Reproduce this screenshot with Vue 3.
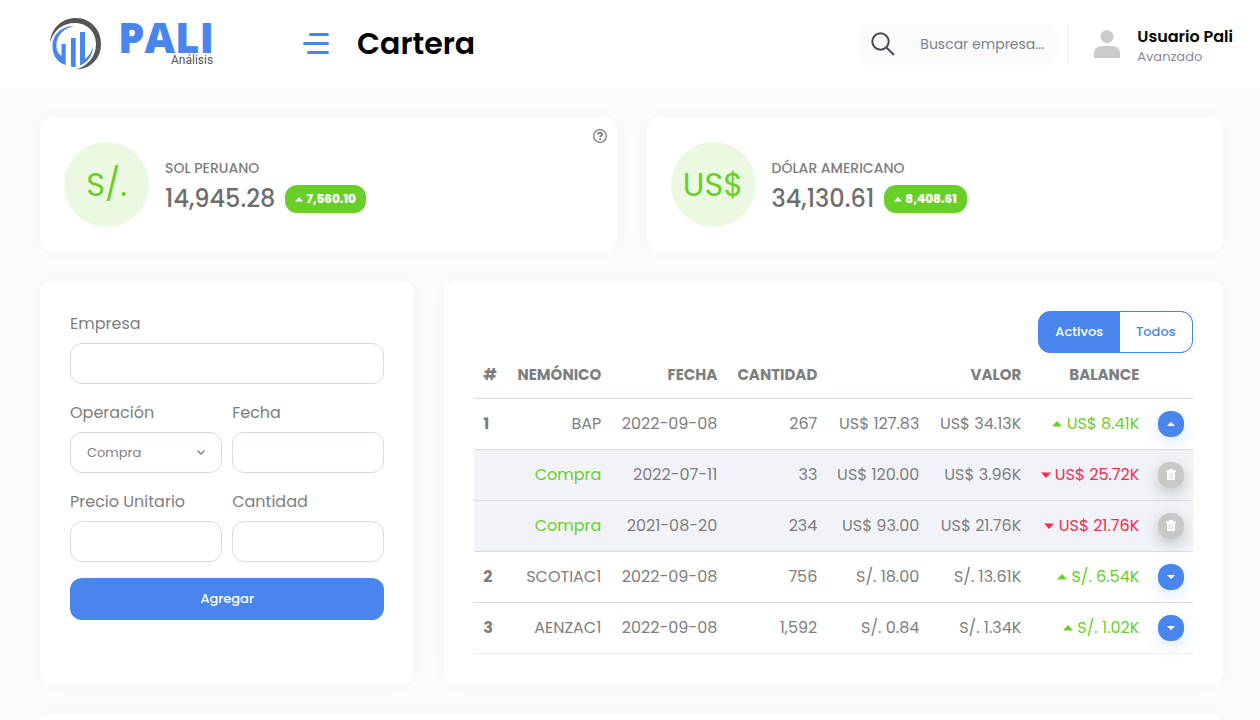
<script setup>
import { ref } from 'vue'

const query = ref('')
const filter = ref('Activos')
const filters = ['Activos', 'Todos']

const balances = [
  { symbol: 'S/.', name: 'SOL PERUANO', amount: '14,945.28', gain: '7,560.10', help: true },
  { symbol: 'US$', name: 'DÓLAR AMERICANO', amount: '34,130.61', gain: '8,408.61', help: false }
]

const rows = [
  { n: '1', code: 'BAP', date: '2022-09-08', qty: '267', price: 'US$ 127.83', value: 'US$ 34.13K', up: true, balance: 'US$ 8.41K', open: true },
  { detail: true, code: 'Compra', date: '2022-07-11', qty: '33', price: 'US$ 120.00', value: 'US$ 3.96K', up: false, balance: 'US$ 25.72K' },
  { detail: true, code: 'Compra', date: '2021-08-20', qty: '234', price: 'US$ 93.00', value: 'US$ 21.76K', up: false, balance: 'US$ 21.76K' },
  { n: '2', code: 'SCOTIAC1', date: '2022-09-08', qty: '756', price: 'S/. 18.00', value: 'S/. 13.61K', up: true, balance: 'S/. 6.54K' },
  { n: '3', code: 'AENZAC1', date: '2022-09-08', qty: '1,592', price: 'S/. 0.84', value: 'S/. 1.34K', up: true, balance: 'S/. 1.02K' }
]
</script>

<template>
  <div class="page">
    <header class="header">
      <a class="brand" href="#" aria-label="Pali Análisis">
        <svg class="emblem" viewBox="0 0 52 52" aria-hidden="true">
          <path d="M0 25 C1 10 12 0 26 0 C40 0 51 11 51 26 C51 41 40 51 26 51.500 C38 48 46 38 46 26 C46 14 37 5 25 5 C12 5 3 13 0 25Z" fill="#555" />
          <path d="M24 8 C12 8 2.500 16 2.500 28 C2.500 38 8 45 15.700 47 V26 H11.500 V38 C8 36 6 31 6.500 26 C7 17 14 10 24 8Z" fill="#4885ed" />
          <path d="M21 20 H25.700 V49 C24 49 22.500 49 21 48.500Z M30 14 H35 V41 C39 38 42 33 43 28 C43 38 37 45 30 47.500Z" fill="#4885ed" />
        </svg>
        <span class="wordmark">
          <span class="name">PALI</span>
          <span class="tagline">Análisis</span>
        </span>
      </a>
      <button class="menu" type="button" aria-label="Menú">
        <svg width="26" height="22" viewBox="0 0 26 22" fill="none" stroke="#4885ed" stroke-width="3" stroke-linecap="round" aria-hidden="true">
          <path d="M7.500 1.500H24.500M1.500 10.500H24.500M5.500 19.500H24.500" />
        </svg>
      </button>
      <h1 class="title">Cartera</h1>
      <label class="search">
        <svg width="24" height="24" viewBox="0 0 24 24" fill="none" stroke="#464a53" stroke-width="2" aria-hidden="true">
          <circle cx="9.500" cy="9.500" r="8.200" />
          <path d="M15.500 15.500L23 23" />
        </svg>
        <input v-model="query" type="text" placeholder="Buscar empresa..." aria-label="Buscar empresa" />
      </label>
      <a class="user" href="#">
        <svg width="28" height="28" viewBox="0 0 28 28" fill="#cbcbcb" aria-hidden="true">
          <circle cx="14" cy="6.500" r="6.500" />
          <path d="M1 28 V24 C1 19 4 16 9 16 H19 C24 16 27 19 27 24 V28Z" />
        </svg>
        <span class="who">
          <strong>Usuario Pali</strong>
          <small>Avanzado</small>
        </span>
      </a>
    </header>

    <main class="content">
      <section v-for="b in balances" :key="b.symbol" class="card summary">
        <span class="coin">{{ b.symbol }}</span>
        <div class="figures">
          <p class="currency">{{ b.name }}</p>
          <div class="amount-line">
            <span class="amount">{{ b.amount }}</span>
            <span class="badge">
              <svg width="8" height="5" viewBox="0 0 8 5" fill="currentColor" aria-hidden="true"><path d="M4 0L8 4.500H0Z" /></svg>
              {{ b.gain }}
            </span>
          </div>
        </div>
        <button v-if="b.help" class="help" type="button" aria-label="Ayuda">
          <svg width="14" height="14" viewBox="0 0 14 14" fill="none" stroke="#7e7e7e" aria-hidden="true">
            <circle cx="7" cy="7" r="6.300" stroke-width="1.300" />
            <path d="M4.900 5.500C5 3.200 9.100 3.200 9.100 5.400C9.100 6.800 7.100 6.700 7.100 8.300" stroke-width="1.800" />
            <path d="M6.100 10.300H8.100" stroke-width="1.800" />
          </svg>
        </button>
      </section>

      <form class="card entry" @submit.prevent>
        <div class="field wide">
          <label for="empresa">Empresa</label>
          <input id="empresa" type="text" />
        </div>
        <div class="field">
          <label for="operacion">Operación</label>
          <div class="select">
            <select id="operacion">
              <option>Compra</option>
              <option>Venta</option>
            </select>
            <svg width="8" height="5" viewBox="0 0 8 5" fill="none" stroke="#7e7e7e" stroke-width="1.300" aria-hidden="true"><path d="M.5 .5L4 4L7.500 .5" /></svg>
          </div>
        </div>
        <div class="field">
          <label for="fecha">Fecha</label>
          <input id="fecha" type="text" />
        </div>
        <div class="field">
          <label for="precio">Precio Unitario</label>
          <input id="precio" type="text" />
        </div>
        <div class="field">
          <label for="cantidad">Cantidad</label>
          <input id="cantidad" type="text" />
        </div>
        <button class="submit wide" type="submit">Agregar</button>
      </form>

      <section class="card holdings">
        <div class="toggle">
          <button v-for="f in filters" :key="f" type="button" :class="{ active: filter === f }" @click="filter = f">{{ f }}</button>
        </div>
        <table>
          <colgroup>
            <col class="c-num" /><col class="c-code" /><col class="c-date" /><col class="c-qty" />
            <col class="c-money" /><col class="c-money" /><col class="c-balance" /><col class="c-action" />
          </colgroup>
          <thead>
            <tr>
              <th>#</th><th>NEMÓNICO</th><th>FECHA</th><th>CANTIDAD</th><th></th><th>VALOR</th><th>BALANCE</th><th></th>
            </tr>
          </thead>
          <tbody>
            <tr v-for="(r, i) in rows" :key="i" :class="{ detail: r.detail }">
              <th>{{ r.n }}</th>
              <td :class="{ gain: r.detail }">{{ r.code }}</td>
              <td>{{ r.date }}</td>
              <td>{{ r.qty }}</td>
              <td>{{ r.price }}</td>
              <td>{{ r.value }}</td>
              <td :class="r.up ? 'gain' : 'loss'">
                <svg class="caret" width="10" height="6" viewBox="0 0 10 6" fill="currentColor" aria-hidden="true">
                  <path :d="r.up ? 'M5 0L10 5.500H0Z' : 'M0 .5H10L5 6Z'" />
                </svg>
                {{ r.balance }}
              </td>
              <td class="action">
                <button type="button" class="round" :aria-label="r.detail ? 'Eliminar' : 'Ver detalle'">
                  <svg v-if="r.detail" width="10" height="11" viewBox="0 0 10 11" aria-hidden="true">
                    <path d="M0 1.500H3V0H7V1.500H10V3H9V11H1V3H0Z" fill="#fff" />
                    <path d="M3.500 4V9.500M5 4V9.500M6.500 4V9.500" stroke="#d5d5d5" stroke-width=".7" />
                  </svg>
                  <svg v-else width="8" height="4" viewBox="0 0 8 4" fill="#fff" aria-hidden="true">
                    <path :d="r.open ? 'M4 0L8 4H0Z' : 'M0 0H8L4 4Z'" />
                  </svg>
                </button>
              </td>
            </tr>
          </tbody>
        </table>
      </section>

      <section class="card next"></section>
    </main>
  </div>
</template>

<style>
body {
  margin: 0;
  background: #fbfbfb;
}
</style>

<style scoped>
* {
  box-sizing: border-box;
}
.page {
  height: 100vh;
  overflow: hidden;
  background: #fbfbfb;
  color: #7e7e7e;
  font-family: Poppins, Inter, sans-serif;
  font-size: 16px;
  line-height: 24px;
}
button,
input,
select {
  font-family: inherit;
}
button {
  border: 0;
  padding: 0;
  cursor: pointer;
}
a {
  color: inherit;
  text-decoration: none;
}
svg {
  flex: none;
}
.header {
  display: flex;
  align-items: center;
  height: 88px;
  padding: 0 27px 0 50px;
  background: #fff;
}
.brand {
  display: flex;
  align-items: center;
  gap: 16px;
  width: 253px;
}
.emblem {
  width: 52px;
  height: 52px;
}
.wordmark {
  display: flex;
  flex-direction: column;
  align-items: flex-end;
  font-family: Roboto, sans-serif;
}
.name {
  color: #4885ed;
  font-family: "Open Sans", sans-serif;
  font-size: 42px;
  font-weight: 800;
  line-height: 32px;
}
.tagline {
  padding-right: 1px;
  color: #555;
  font-size: 12px;
  line-height: 14px;
}
.menu {
  display: flex;
  background: none;
}
.title {
  flex: 1;
  margin: 0 0 0 28px;
  color: #000;
  font-size: 30px;
  font-weight: 600;
  line-height: 40px;
}
.search {
  display: flex;
  align-items: center;
  gap: 25px;
  width: 200px;
  height: 41px;
  padding: 0 12px 0 13px;
  border-radius: 12px;
  background: #fbfbfb;
}
.search input {
  flex: 1;
  min-width: 0;
  padding: 0;
  border: 0;
  outline: 0;
  background: none;
  font-size: 14px;
}
.search input::placeholder {
  color: #7a828a;
  opacity: 1;
}
.user {
  display: flex;
  align-items: center;
  gap: 16px;
  height: 40px;
  margin-left: 9px;
  padding-left: 25px;
  border-left: 1px solid #eee;
}
.who {
  display: flex;
  flex-direction: column;
  padding-top: 4px;
}
.who strong {
  color: #000;
  font-weight: 600;
  line-height: 22px;
}
.who small {
  color: #89879f;
  font-size: 13px;
  line-height: 18px;
}
.content {
  display: grid;
  grid-template-columns: repeat(12, minmax(0, 1fr));
  gap: 30px;
  padding: 30px 37px 30px 40px;
}
.card {
  position: relative;
  border-radius: 12px;
  background: #fff;
  box-shadow: 0 0 20px rgba(0, 0, 0, 0.03);
}
.summary {
  grid-column: span 6;
  display: flex;
  align-items: center;
  gap: 16px;
  padding: 24px;
}
.coin {
  display: flex;
  align-items: center;
  justify-content: center;
  width: 85px;
  height: 85px;
  border-radius: 50%;
  background: #ebf8e2;
  color: #68cf29;
  font-size: 32px;
}
.figures {
  padding-top: 6px;
}
.currency {
  margin: 0;
  font-size: 14px;
  font-weight: 500;
  line-height: 20px;
}
.amount-line {
  display: flex;
  align-items: center;
  gap: 10px;
  padding-top: 3px;
}
.amount {
  color: #6e6e6e;
  font-size: 24px;
  font-weight: 500;
  line-height: 36px;
}
.badge {
  display: flex;
  align-items: center;
  gap: 3px;
  height: 28px;
  padding: 0 10px;
  border-radius: 12px;
  background: #68cf29;
  color: #fff;
  font-size: 12px;
  font-weight: 800;
}
.help {
  position: absolute;
  top: 11px;
  right: 10px;
  display: flex;
  background: none;
}
.entry {
  grid-column: span 4;
  display: grid;
  grid-template-columns: repeat(2, minmax(0, 1fr));
  align-content: start;
  gap: 16px 10px;
  padding: 30px;
}
.wide {
  grid-column: 1 / -1;
}
.field label {
  display: block;
  margin-bottom: 6px;
  line-height: 26px;
}
.field input,
.field select {
  display: block;
  width: 100%;
  height: 41px;
  padding: 0 16px;
  border: 1px solid #d7dae3;
  border-radius: 12px;
  outline: 0;
  background: #fff;
  color: #7e7e7e;
  font-size: 13px;
}
.select {
  position: relative;
}
.field select {
  appearance: none;
}
.select svg {
  position: absolute;
  top: 18px;
  right: 17px;
  pointer-events: none;
}
.submit {
  height: 42px;
  border-radius: 12px;
  background: #4885ed;
  color: #fff;
  font-size: 13px;
  font-weight: 500;
}
.holdings {
  grid-column: span 8;
  padding: 30px;
}
.toggle {
  display: flex;
  width: 155px;
  height: 42px;
  margin-left: auto;
  overflow: hidden;
  border: 1px solid #4885ed;
  border-radius: 12px;
  background: #4885ed;
}
.toggle button {
  flex: 1 1 auto;
  background: #fff;
  color: #4885ed;
  font-size: 13px;
  font-weight: 500;
}
.toggle button:last-child {
  border-radius: 0 11px 11px 0;
}
.toggle .active {
  background: #4885ed;
  color: #fff;
}
table {
  width: 100%;
  table-layout: fixed;
  border-collapse: collapse;
  text-align: right;
  white-space: nowrap;
}
.c-num {
  width: 33px;
}
.c-code {
  width: 104px;
}
.c-date {
  width: 116px;
}
.c-qty {
  width: 100px;
}
.c-money {
  width: 102px;
}
.c-balance {
  width: 118px;
}
.c-action {
  width: 44px;
}
tr {
  border-bottom: 1px solid #d7dae3;
}
tbody tr:last-child {
  border-color: #eee;
}
th,
td {
  height: 51px;
  padding: 0 10px 0 0;
}
th:first-child {
  padding-left: 9px;
  text-align: left;
}
thead th {
  height: 45px;
  font-size: 15px;
  font-weight: 700;
}
.detail {
  background: #f2f3f9;
}
.gain {
  color: #68cf29;
}
.loss {
  color: #f72b50;
}
.caret {
  vertical-align: 2px;
}
.action {
  padding-right: 9px;
}
.round {
  display: flex;
  align-items: center;
  justify-content: center;
  width: 26px;
  height: 26px;
  margin-left: auto;
  border-radius: 12px;
  background: #4885ed;
  box-shadow: 0 5px 15px rgba(72, 133, 237, 0.2);
}
.detail .round {
  background: #c8c8c8;
  box-shadow: 0 5px 15px rgba(0, 0, 0, 0.2);
}
.next {
  grid-column: 1 / -1;
  height: 200px;
}
</style>
